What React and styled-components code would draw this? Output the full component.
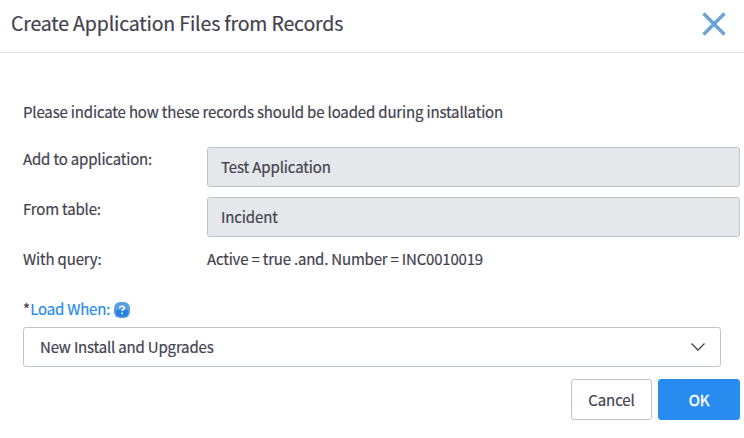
import React from "react";
import styled, { createGlobalStyle } from "styled-components";

const GlobalStyle = createGlobalStyle`
  *, *::before, *::after { box-sizing: border-box; }
  body {
    margin: 0;
    background: #fff;
    color: #43424f;
    font-family: "Noto Sans CJK SC", "Open Sans", sans-serif;
    font-size: 15px;
    line-height: 20px;
    letter-spacing: -0.12px;
    -webkit-text-stroke: 0.2px currentColor;
  }
  button { font: inherit; letter-spacing: inherit; }
`;

const Dialog = styled.main`
  display: flex;
  flex-direction: column;
  width: 744px;
  height: 438px;
  overflow: hidden;
`;

const Header = styled.header`
  display: flex;
  align-items: center;
  justify-content: space-between;
  height: 53px;
  padding: 0 17px 4px 11px;
  border-bottom: 1px solid #e1e5e9;
`;

const Title = styled.h1`
  margin: 0 0 2px;
  font-size: 19.5px;
  line-height: 28px;
  font-weight: 400;
  letter-spacing: -0.16px;
`;

const CloseButton = styled.button`
  display: flex;
  padding: 0;
  border: 0;
  background: none;
`;

const Body = styled.section`
  display: flex;
  flex-direction: column;
  padding: 49px 4px 0 23px;
`;

const Intro = styled.p`
  margin: 0 0 25px;
  letter-spacing: -0.16px;
`;

const Fields = styled.div`
  display: grid;
  grid-template-columns: 184px 1fr;
  row-gap: 10px;
`;

const Label = styled.div`
  padding-top: 2px;
  letter-spacing: -0.17px;
`;

const ReadOnlyField = styled.div`
  display: flex;
  align-items: center;
  height: 40px;
  padding: 0 13px;
  border: 1px solid #bdc4cd;
  border-radius: 3px;
  background: #e4e8eb;
`;

const Query = styled.div`
  padding-top: 2px;
  letter-spacing: -0.2px;
  word-spacing: 0;
`;

const LoadLabel = styled.div`
  display: flex;
  align-items: center;
  height: 20px;
  margin-top: 30px;
  color: #278bf0;
  letter-spacing: -0.2px;
`;

const Required = styled.span`
  color: #43424f;
  margin-right: 0.5px;
`;

const HelpIcon = styled.svg`
  margin: 1px 0 0 4px;
`;

const Select = styled.div`
  display: flex;
  align-items: center;
  justify-content: space-between;
  width: 698px;
  height: 40px;
  margin-top: 8px;
  padding: 0 14px 0 16px;
  border: 1px solid #bdc4cd;
  border-radius: 3px;
  letter-spacing: -0.18px;
`;

const Actions = styled.footer`
  display: flex;
  justify-content: flex-end;
  gap: 6px;
  margin-top: 12px;
`;

const Button = styled.button`
  width: ${(p) => (p.$primary ? 82 : 81)}px;
  height: 41px;
  padding: 0;
  border: 1px solid ${(p) => (p.$primary ? "#278bf0" : "#bdc4cd")};
  border-radius: 3px;
  background: ${(p) => (p.$primary ? "#278bf0" : "#fff")};
  color: ${(p) => (p.$primary ? "#fff" : "#43424f")};
  -webkit-text-stroke-width: ${(p) => (p.$primary ? 0.4 : 0.2)}px;
`;

export default function App() {
  return (
    <>
      <GlobalStyle />
      <Dialog>
        <Header>
          <Title>Create Application Files from Records</Title>
          <CloseButton aria-label="Close">
            <svg width="26" height="26" viewBox="0 0 26 26" fill="none">
              <path d="M2.5 2.5 23.5 23.5M23.5 2.5 2.5 23.5" stroke="#6aa2d8" strokeWidth="3.4" />
            </svg>
          </CloseButton>
        </Header>
        <Body>
          <Intro>Please indicate how these records should be loaded during installation</Intro>
          <Fields>
            <Label>Add to application:</Label>
            <ReadOnlyField>Test Application</ReadOnlyField>
            <Label>From table:</Label>
            <ReadOnlyField>Incident</ReadOnlyField>
            <Label>With query:</Label>
            <Query>Active = true .and. Number = INC0010019</Query>
          </Fields>
          <LoadLabel>
            <Required>*</Required>
            <span>Load When:</span>
            <HelpIcon width="16" height="16" viewBox="0 0 16 16" fill="none">
              <rect width="16" height="16" rx="6" fill="#5c9fe2" />
              <path d="M2 8h12v2.5a4 4 0 0 1-4 4H6a4 4 0 0 1-4-4z" fill="#2582e4" />
              <path d="M5.7 6.2C5.7 4.8 6.7 4.2 8 4.2s2.4.7 2.4 1.9c0 1.5-2.2 1.5-2.4 3.1M8 10.6v1.6" stroke="#fff" strokeWidth="1.5" />
            </HelpIcon>
          </LoadLabel>
          <Select>
            <span>New Install and Upgrades</span>
            <svg width="16" height="10" viewBox="0 0 16 10" fill="none">
              <path d="M1.5 1.5 8 8l6.5-6.5" stroke="#43424f" strokeWidth="1.3" />
            </svg>
          </Select>
          <Actions>
            <Button>Cancel</Button>
            <Button $primary>OK</Button>
          </Actions>
        </Body>
      </Dialog>
    </>
  );
}
